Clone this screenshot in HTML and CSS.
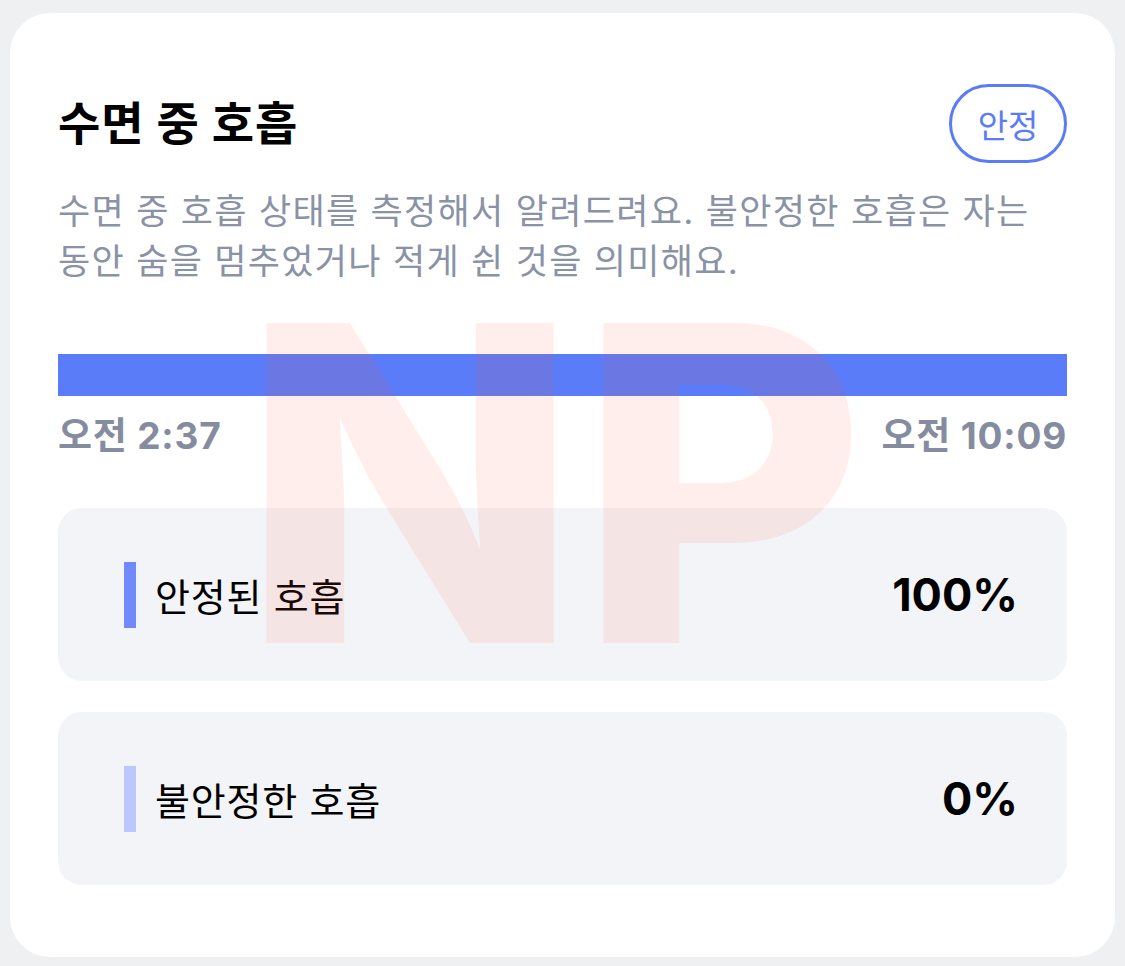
FILE: index.html
```html
<!DOCTYPE html>
<html lang="ko">
<head>
<meta charset="utf-8">
<title>수면 중 호흡</title>
<link rel="stylesheet" href="styles.css">
</head>
<body>
<section class="card">
  <div class="header">
    <h1 class="title">수면 중 호흡</h1>
    <span class="badge">안정</span>
  </div>
  <p class="desc">수면 중 호흡 상태를 측정해서 알려드려요. 불안정한 호흡은 자는 동안 숨을 멈추었거나 적게 쉰 것을 의미해요.</p>
  <div class="bar"></div>
  <div class="times">
    <span>오전 2:37</span>
    <span>오전 10:09</span>
  </div>
  <div class="rows">
    <div class="row">
      <span class="ind ind-stable"></span>
      <span class="label">안정된 호흡</span>
      <span class="value">100%</span>
    </div>
    <div class="row">
      <span class="ind ind-unstable"></span>
      <span class="label">불안정한 호흡</span>
      <span class="value">0%</span>
    </div>
  </div>
  <div class="watermark" aria-hidden="true"><span class="wm-text">NP</span></div>
</section>
</body>
</html>
```

FILE: styles.css
```css
* { box-sizing: border-box; }

html, body {
  margin: 0;
  padding: 0;
}

body {
  background: #eff0f2;
  padding: 13px 10px 8px 10px;
  font-family: "Inter", "Noto Sans CJK KR", sans-serif;
  color: #000;
}

.card {
  position: relative;
  background: #ffffff;
  border-radius: 40px;
  padding: 71px 48px 72px 48px;
  overflow: hidden;
}

.header {
  display: flex;
  align-items: center;
  justify-content: space-between;
}

.title {
  margin: 0;
  font-size: 46px;
  font-weight: 700;
  line-height: 1.2;
  letter-spacing: 1px;
}

.badge {
  display: inline-flex;
  align-items: center;
  justify-content: center;
  height: 79px;
  width: 118px;
  border: 3px solid #5b7cf8;
  border-radius: 40px;
  color: #5b7cf8;
  font-size: 33px;
  font-weight: 400;
}

.desc {
  margin: 23px 0 0 0;
  font-size: 35px;
  line-height: 50px;
  letter-spacing: 1.3px;
  word-break: keep-all;
  color: #8a92a6;
}

.bar {
  margin-top: 68px;
  height: 42px;
  background: #5b7cf8;
}

.times {
  display: flex;
  justify-content: space-between;
  margin-top: 20px;
  font-size: 37px;
  font-weight: 700;
  line-height: 40px;
  letter-spacing: 0.8px;
  color: #858ca0;
}

.rows {
  display: flex;
  flex-direction: column;
  gap: 31px;
  margin-top: 52px;
}

.row {
  display: flex;
  align-items: center;
  height: 173px;
  padding: 0 49px 0 66px;
  background: #f3f4f8;
  border-radius: 24px;
}

.ind {
  width: 12px;
  height: 66px;
  flex: none;
}

.ind-stable { background: #7189fb; }
.ind-unstable { background: #bcc8fc; }

.label {
  margin-left: 19px;
  font-size: 38px;
  font-weight: 400;
  letter-spacing: 0.8px;
  flex: 1;
}

.value {
  font-size: 45px;
  font-weight: 700;
}

.watermark {
  position: absolute;
  inset: 0;
  display: flex;
  align-items: center;
  justify-content: center;
  padding-bottom: 4px;
  padding-right: 18px;
  pointer-events: none;
}

.wm-text {
  display: inline-block;
  font-family: "Inter", sans-serif;
  font-weight: 800;
  font-size: 440px;
  line-height: 1;
  letter-spacing: 0;
  color: rgba(255, 90, 60, 0.1);
}
```
